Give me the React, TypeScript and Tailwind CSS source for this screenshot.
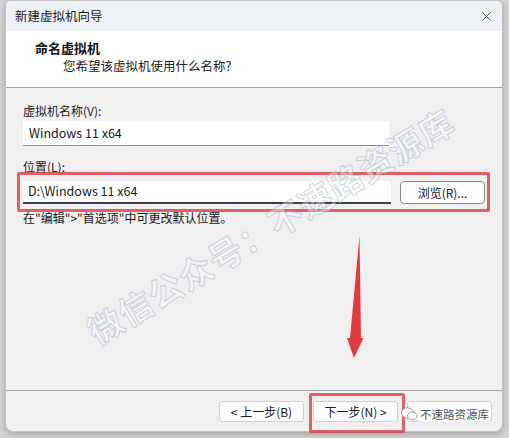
import { X } from 'lucide-react'

const font = "font-['Segoe_UI','Noto_Sans_CJK_SC','Noto_Sans',sans-serif]"

function Btn({ children, className = '' }: { children: React.ReactNode; className?: string }) {
  return (
    <div
      className={`w-[85px] h-[21px] flex items-center justify-center rounded-[3px] border border-[#d0d0d0] bg-[#fdfdfd] text-[12px] text-[#1a1a1a] ${className}`}
    >
      {children}
    </div>
  )
}

export default function App() {
  return (
    <div className={`relative w-[509px] h-[438px] overflow-hidden bg-[#d4d4d4] ${font}`}>
      <div className="flex h-full pl-[5px] pr-[6px] pb-[6px]">
        {/* dialog window */}
        <div className="flex flex-col w-full rounded-b-[8px] rounded-t-[6px] overflow-hidden border border-[#c4c4c4] bg-[#f0f0f0] shadow-[0_2px_6px_rgba(0,0,0,0.25)]">
          {/* title bar */}
          <div className="h-[30px] flex items-center justify-between pl-[9px] pr-[8px] bg-[#eef1f6] text-[12.5px] text-[#1b1b1b]">
            <span>新建虚拟机向导</span>
            <X className="w-[15px] h-[15px] text-[#333]" strokeWidth={1.3} />
          </div>

          {/* header */}
          <div className="h-[57px] bg-white border-b border-[#a3a3a3] pl-[29px] pt-[8px]">
            <div className="text-[13px] font-bold text-[#111] leading-[18px]">命名虚拟机</div>
            <div className="text-[12.5px] text-[#222] leading-[18px] pl-[28px]">您希望该虚拟机使用什么名称?</div>
          </div>

          {/* body */}
          <div className="flex-1 flex flex-col px-[17px] pt-[15px] text-[12px] text-[#1a1a1a]">
            <div className="leading-[16px]">虚拟机名称(V):</div>
            <div className="mt-[2px] w-[366px] h-[25px] flex items-center pl-[6px] bg-white border-b border-[#8c8c8c] text-[12.5px]">
              Windows 11 x64
            </div>
            <div className="mt-[13px] leading-[16px]">位置(L):</div>
            <div className="mt-[6px] flex items-center gap-[9px]">
              <div className="w-[368px] h-[23px] flex items-center pl-[5px] bg-white border-b-2 border-[#3a3f52] text-[12.5px]">
                D:\Windows 11 x64
              </div>
              <div className="w-[85px] h-[23px] flex items-center justify-center rounded-[4px] border border-[#8a8a8a] bg-[#fbfbfb] text-[12px]">
                浏览(R)...
              </div>
            </div>
            <div className="mt-[6px] leading-[16px]">在"编辑"&gt;"首选项"中可更改默认位置。</div>
          </div>

          {/* footer */}
          <div className="h-[41px] border-t border-[#a3a3a3] flex items-start justify-end gap-[9px] pt-[10px] pr-[10px]">
            <Btn>&lt; 上一步(B)</Btn>
            <Btn>下一步(N) &gt;</Btn>
            <Btn> </Btn>
          </div>
        </div>
      </div>

      {/* red highlight boxes */}
      <div className="absolute left-[17px] top-[172px] w-[473px] h-[40px] border-[3px] border-[#d9484f]/85 rounded-[2px]" />
      <div className="absolute left-[309px] top-[393px] w-[96px] h-[40px] border-[3px] border-[#d9484f]/85 rounded-[2px]" />

      {/* red arrow */}
      <svg className="absolute left-[340px] top-[232px]" width="30" height="130" viewBox="0 0 30 130">
        <path d="M19.5 4 L21 106 L23.5 106 L14 126 L7 106 L10 106 Z" fill="#e03b40" />
      </svg>

      {/* watermark */}
      <div className="absolute left-[60px] top-[200px] w-[420px] text-center whitespace-nowrap -rotate-[31deg] text-[34px] font-bold tracking-[1px] text-white/40 [-webkit-text-stroke:1px_rgba(170,180,205,0.55)] select-none pointer-events-none">
        微信公众号：不速路资源库
      </div>

      {/* bottom-right mark */}
      <div className="absolute left-[400px] top-[404px] h-[19px] w-[94px] flex items-center gap-[1px] whitespace-nowrap text-[11.5px] text-[#555]">
        <svg width="19" height="16" viewBox="0 0 20 16" className="shrink-0">
          <ellipse cx="8" cy="7" rx="6.5" ry="5.5" fill="#fff" stroke="#999" strokeWidth="1" />
          <ellipse cx="13" cy="10" rx="5" ry="4.2" fill="#fff" stroke="#999" strokeWidth="1" />
        </svg>
        <span className="bg-white/70 leading-[16px]">不速路资源库</span>
      </div>
    </div>
  )
}
